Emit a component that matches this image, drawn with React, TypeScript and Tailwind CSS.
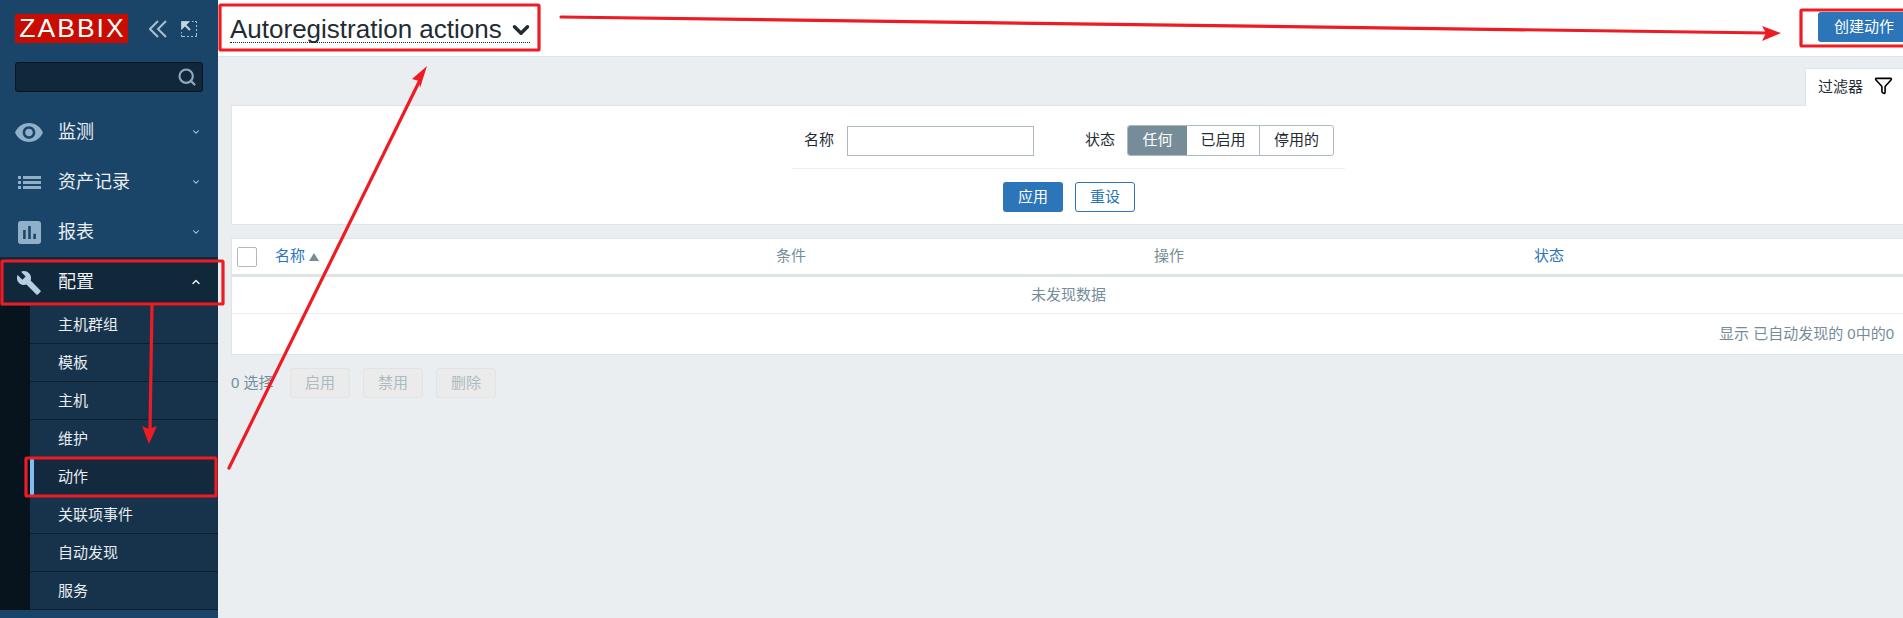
import React from "react";
import { ChevronDown, ChevronUp, Search, Filter } from "lucide-react";

const topMenu = [
  { label: "监测", icon: "eye" },
  { label: "资产记录", icon: "list" },
  { label: "报表", icon: "chart" },
];

const subMenu = ["主机群组", "模板", "主机", "维护", "动作", "关联项事件", "自动发现", "服务"];

const MenuIcon = ({ name }: { name: string }) => {
  if (name === "eye") {
    return (
      <svg viewBox="1 4.5 22 15" className="w-7 h-[19px] fill-[#8fb0c8]">
        <path d="M12 4.5C7 4.5 2.73 7.61 1 12c1.73 4.39 6 7.5 11 7.5s9.27-3.11 11-7.5c-1.73-4.39-6-7.5-11-7.5zM12 17c-2.76 0-5-2.24-5-5s2.24-5 5-5 5 2.24 5 5-2.24 5-5 5zm0-8c-1.66 0-3 1.34-3 3s1.34 3 3 3 3-1.34 3-3-1.34-3-3-3z" />
      </svg>
    );
  }
  if (name === "list") {
    return (
      <svg viewBox="0 0 23 13" className="w-[23px] h-[13px] fill-[#8fb0c8]">
        <rect x="0" y="0" width="3" height="3" />
        <rect x="5" y="0" width="18" height="3" />
        <rect x="0" y="5" width="3" height="3" />
        <rect x="5" y="5" width="18" height="3" />
        <rect x="0" y="10" width="3" height="3" />
        <rect x="5" y="10" width="18" height="3" />
      </svg>
    );
  }
  if (name === "chart") {
    return (
      <svg viewBox="3 3 18 18" className="w-[23px] h-[23px] fill-[#8fb0c8]">
        <path d="M19 3H5c-1.1 0-2 .9-2 2v14c0 1.1.9 2 2 2h14c1.1 0 2-.9 2-2V5c0-1.1-.9-2-2-2zM9 17H7v-7h2v7zm4 0h-2V7h2v10zm4 0h-2v-4h2v4z" />
      </svg>
    );
  }
  return (
    <svg viewBox="1 1 22.2 22.2" className="w-6 h-6 fill-[#b5cfe2]">
      <path d="M22.7 19l-9.1-9.1c.9-2.3.4-5-1.5-6.9-2-2-5-2.4-7.4-1.3L9 6 6 9 1.6 4.7C.4 7.1.9 10.1 2.9 12.1c1.9 1.9 4.6 2.4 6.9 1.5l9.1 9.1c.4.4 1 .4 1.4 0l2.3-2.3c.5-.4.5-1.1.1-1.4z" />
    </svg>
  );
};

const Sidebar = () => (
  <aside className="w-[218px] shrink-0 h-full bg-[#1a4569] flex flex-col">
    <div className="h-[62px] shrink-0 pt-[14px] pl-[15px] flex items-start">
      <div className="w-[113px] h-[29px] bg-[#c80c00] text-white text-[26.5px] leading-[29px] tracking-[2px] pl-[2px] text-center font-normal">
        ZABBIX
      </div>
      <svg viewBox="0 0 18 18" className="w-[18px] h-[18px] ml-[21px] mt-[6px] fill-none stroke-[#a9c0d0] stroke-2">
        <path d="M9 1L1 9l8 8M17 1L9 9l8 8" />
      </svg>
      <svg viewBox="0 0 16 16" className="w-4 h-4 ml-[14px] mt-[7px] fill-none stroke-[#a9c0d0]">
        <path d="M11 .5h1.500M14 .5h1.500V2M15.500 4v2M15.500 8v2M15.500 12v3.500H14M12 15.500h-2M8 15.500H6M4 15.500H.5V14M.5 12.500V11" />
        <path d="M.5 .5h8L.5 8.500z" className="fill-[#c4d6e2]" />
        <path d="M3 3l6 6" className="stroke-[#c4d6e2] stroke-2" />
      </svg>
    </div>
    <div className="mx-[15px] h-[30px] shrink-0 bg-[#11273a] border border-[#07141d] rounded-[3px] flex items-center justify-end pr-[5px]">
      <Search className="w-[20px] h-[20px] text-[#8fa9bb]" strokeWidth={2.6} />
    </div>
    <nav className="mt-[15px] flex flex-col">
      {topMenu.map(item => (
        <div key={item.label} className="h-[50px] flex items-center text-[#e8eef2] text-[18px]">
          <span className="w-[58px] flex justify-center">
            <MenuIcon name={item.icon} />
          </span>
          <span className="flex-1">{item.label}</span>
          <ChevronDown className="w-[10px] h-[10px] mr-[17px] text-[#c5d3dd]" strokeWidth={2.5} />
        </div>
      ))}
      <div className="h-[49px] bg-[#11273a] flex items-center text-[#eef2f5] text-[18px]">
        <span className="w-[58px] flex justify-center pt-[3px]">
          <MenuIcon name="wrench" />
        </span>
        <span className="flex-1 pt-[1px]">配置</span>
        <ChevronUp className="w-[12px] h-[12px] mr-[16px] text-white" strokeWidth={2.5} />
      </div>
      <div className="flex bg-[#07141d]">
        <ul className="ml-[30px] flex-1 bg-[#17334c]">
          {subMenu.map(item => (
            <li
              key={item}
              className={`h-[38px] flex items-center pt-[2px] text-[15px] text-[#e8eef2] border-b border-[#0d2030] ${
                item === "动作" ? "bg-[#13293d] pl-[24px] border-l-4 border-l-[#80bdf0]" : "pl-[28px]"
              }`}
            >
              {item}
            </li>
          ))}
        </ul>
      </div>
    </nav>
  </aside>
);

const FilterBar = () => (
  <section className="mt-[11px]">
    <div className="flex justify-end">
      <div className="w-[105px] h-[38px] -mb-[1px] relative bg-white border-l border-t border-[#dfe4e7] flex items-center pl-[12px] text-[15px] text-[#1f2c33]">
        过滤器
        <Filter className="w-[19px] h-[19px] ml-[11px] -mt-[4px] text-black" strokeWidth={2} />
      </div>
    </div>
    <div className="h-[120px] bg-white border border-[#dfe4e7] pt-[19px] text-[15px] text-[#1f2c33]">
      <div className="flex items-center h-[31px]">
        <span className="ml-[572px] w-[31px]">名称</span>
        <div className="ml-[12px] w-[187px] h-[30px] border border-[#acbbc2]" />
        <span className="ml-[51px] w-[31px]">状态</span>
        <div className="ml-[11px] flex h-[31px] border border-[#acbbc2] rounded-[3px] overflow-hidden">
          <span className="w-[59px] bg-[#768d99] text-white flex items-center justify-center">任何</span>
          <span className="w-[73px] border-r border-[#acbbc2] flex items-center justify-center">已启用</span>
          <span className="w-[73px] flex items-center justify-center">停用的</span>
        </div>
      </div>
      <div className="ml-[560px] w-[553px] mt-[12px] border-t border-[#ebeef0]" />
      <div className="flex ml-[771px] mt-[13px] gap-[12px]">
        <button className="w-[60px] h-[30px] bg-[#2b75b8] text-white rounded-[3px]">应用</button>
        <button className="w-[60px] h-[30px] bg-white text-[#2b75b8] border border-[#2b75b8] rounded-[3px]">重设</button>
      </div>
    </div>
  </section>
);

const ActionTable = () => (
  <section className="mt-[13px] bg-white border border-[#dfe4e7] text-[15px] h-[117px] flex flex-col">
    <div className="h-[38px] shrink-0 flex items-center border-b-[3px] border-[#dfe4e7] text-[#768d99] relative">
      <span className="ml-[5px] w-[20px] h-[20px] bg-white border border-[#acbbc2] rounded-[2px]" />
      <span className="ml-[18px] w-[501px] flex items-center text-[#2b75b8]">
        名称
        <svg viewBox="0 0 10 8" className="w-[10px] h-[8px] ml-[4px] fill-[#768d99]">
          <path d="M5 0l5 8H0z" />
        </svg>
      </span>
      <span className="w-[378px]">条件</span>
      <span className="w-[380px]">操作</span>
      <span className="text-[#2b75b8]">状态</span>
    </div>
    <div className="h-[37px] shrink-0 flex items-center justify-center border-b border-[#ebeef0] text-[#768d99] pr-[4px]">
      未发现数据
    </div>
    <div className="flex-1 flex items-center justify-end pr-[15px] text-[#768d99]">显示 已自动发现的 0中的0</div>
  </section>
);

const Annotations = () => (
  <svg className="absolute inset-0 w-[1903px] h-[618px] pointer-events-none" viewBox="0 0 1903 618" fill="none">
    <g stroke="#ed1c24" strokeWidth="3.2" strokeLinecap="round">
      <rect x="220" y="5" width="319" height="45" rx="1" />
      <rect x="1801" y="10" width="110" height="36" rx="1" />
      <rect x="2" y="261" width="221" height="43" rx="1" />
      <rect x="26" y="458" width="190" height="38" rx="1" />
      <path d="M561 17L1768 33" />
      <path d="M152 305L150 430" />
      <path d="M229 468L420 80" />
    </g>
    <g fill="#ed1c24">
      <path d="M1781 33L1762 26L1766 33L1762 41z" />
      <path d="M149 444L142 426L149 429L157 426z" />
      <path d="M427 66L412 79L419 81L420 88z" />
    </g>
  </svg>
);

const App = () => (
  <div className="relative w-[1903px] h-[618px] overflow-hidden flex bg-[#ebeef0] font-['Liberation_Sans','Noto_Sans_CJK_SC',sans-serif]">
    <Sidebar />
    <main className="w-[1692px] shrink-0">
      <header className="h-[57px] bg-white border-b border-[#dfe4e7] flex items-start justify-between pl-[12px]">
        <div className="mt-[12px] h-[31px] flex items-center border-b border-dotted border-[#1f2c33] text-[26px] leading-[30px] text-[#1f2c33] pt-[3px]">
          Autoregistration actions
          <ChevronDown className="w-[26px] h-[26px] ml-[6px] -mr-[4px] mt-[3px]" strokeWidth={3.2} />
        </div>
        <button className="mt-[12px] w-[92px] h-[30px] bg-[#2b75b8] text-white text-[15px] rounded-[3px]">创建动作</button>
      </header>
      <div className="pl-[13px]">
        <FilterBar />
        <ActionTable />
        <div className="mt-[13px] flex items-center text-[15px]">
          <span className="w-[59px] text-[#768d99]">0 选择</span>
          <div className="flex gap-[13px]">
            {["启用", "禁用", "删除"].map(label => (
              <button key={label} className="w-[60px] h-[30px] bg-[#ebebeb] border border-[#dfe4e7] text-[#acbbc2] rounded-[3px]">
                {label}
              </button>
            ))}
          </div>
        </div>
      </div>
    </main>
    <Annotations />
  </div>
);

export default App;
